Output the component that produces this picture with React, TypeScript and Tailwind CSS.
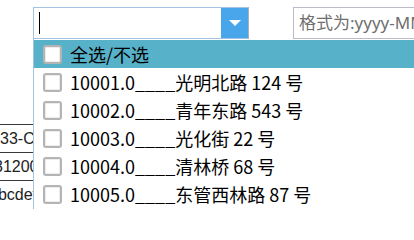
import React from "react";

const items = [
  "10001.0____光明北路 124 号",
  "10002.0____青年东路 543 号",
  "10003.0____光化街 22 号",
  "10004.0____清林桥 68 号",
  "10005.0____东管西林路 87 号",
];

function Check() {
  return (
    <div className="w-[19px] h-[19px] shrink-0 rounded-[3px] border-2 border-[#b4b4b4] bg-white shadow-[inset_0_0_0_1px_#ececec]" />
  );
}

export default function App() {
  return (
    <div
      className="relative w-[414px] h-[209px] overflow-hidden bg-white"
      style={{ fontFamily: '"Noto Sans CJK SC", "Noto Sans", sans-serif' }}
    >
      <div className="flex pt-[7px] pl-[33px]">
        <div className="flex shrink-0 w-[216px] h-[32px] border border-[#a3c3e3] border-r-[#aab0b8]">
          <div className="flex-1 flex items-center">
            <div className="ml-[5px] w-px h-[22px] bg-black" />
          </div>
          <div className="w-[27px] h-full bg-[#4aa6ea] flex items-center justify-center">
            <svg width="12" height="6" viewBox="0 0 12 6">
              <polygon points="0,0 12,0 6,6" fill="#ffffff" />
            </svg>
          </div>
        </div>
        <div
          className="ml-[44px] shrink-0 w-[140px] h-[32px] border border-[#b9bcc6] pl-[5px] flex items-center overflow-hidden whitespace-nowrap text-[17px] text-[#6f6f6f]"
          style={{ fontFamily: '"Noto Sans", "Noto Sans CJK SC", sans-serif' }}
        >
          格式为:yyyy-MM
        </div>
      </div>

      <div
        className="mt-[85px] w-[33px] overflow-hidden text-[16px] text-[#222]"
        style={{ fontFamily: '"Liberation Sans", Arial, sans-serif' }}
      >
        <div className="h-[28px] border-t border-[#3a3a3a] flex items-center whitespace-nowrap">
          <span>33-CD</span>
        </div>
        <div className="h-[28px] border-t border-[#3a3a3a] flex items-center whitespace-nowrap">
          <span className="ml-[-6px]">31200</span>
        </div>
        <div className="h-[28px] border-t border-[#3a3a3a] flex items-center whitespace-nowrap">
          <span className="ml-[-11px]">abcdef</span>
        </div>
      </div>

      <div className="absolute left-[33px] top-[39px] w-[400px] bottom-0 border-l border-[#a3c3e3] bg-white pt-[1px]">
        <div className="h-[28px] flex items-center pl-[9px] gap-[8px] bg-[#57b1c8] text-[18px] text-black whitespace-nowrap">
          <Check />
          <span className="leading-none">全选/不选</span>
        </div>
        {items.map((t) => (
          <div
            key={t}
            className="h-[28px] flex items-center pl-[9px] gap-[8px] text-[18px] text-black whitespace-nowrap"
          >
            <Check />
            <span className="leading-none">{t}</span>
          </div>
        ))}
      </div>
    </div>
  );
}
